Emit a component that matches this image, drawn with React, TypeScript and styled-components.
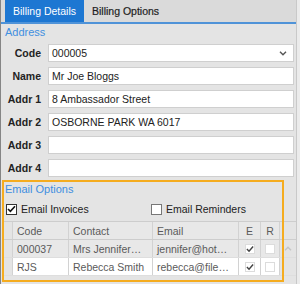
import React from "react";
import styled, { createGlobalStyle } from "styled-components";

const GlobalStyle = createGlobalStyle`
	html, body {
		margin: 0;
		padding: 0;
		background: #ebebeb;
		overflow: hidden;
	}
	body {
		font-family: "Liberation Sans", Arial, sans-serif;
	}
`;

const addressRows = [
	{ label: "Code", value: "000005", select: true },
	{ label: "Name", value: "Mr Joe Bloggs" },
	{ label: "Addr 1", value: "8 Ambassador Street" },
	{ label: "Addr 2", value: "OSBORNE PARK WA 6017" },
	{ label: "Addr 3", value: "" },
	{ label: "Addr 4", value: "" },
];

const contacts = [
	{ code: "000037", contact: "Mrs Jennifer…", email: "jennifer@hot…", e: true, r: false },
	{ code: "RJS", contact: "Rebecca Smith", email: "rebecca@file…", e: true, r: false },
];

const Chevron = ({ up }: { up?: boolean }) => (
	<svg width="8" height="5" viewBox="0 0 8 5">
		<path
			d={up ? "M1 4.2 L4 1.2 L7 4.2" : "M1 0.8 L4 3.8 L7 0.8"}
			fill="none"
			stroke={up ? "#c4c4c4" : "#555"}
			strokeWidth="1.4"
		/>
	</svg>
);

const Tick = ({ color }: { color: string }) => (
	<svg width="9" height="8" viewBox="0 0 9 8">
		<path d="M1 4 L3.4 6.4 L8 1.2" fill="none" stroke={color} strokeWidth="1.6" />
	</svg>
);

const App = () => {
	return (
		<>
			<GlobalStyle />
			<Panel>
				<TabBar>
					<Tab active>Billing Details</Tab>
					<Tab>Billing Options</Tab>
				</TabBar>
				<Body>
					<SectionTitle>Address</SectionTitle>
					<Form>
						{addressRows.map((row) => (
							<React.Fragment key={row.label}>
								<Label>{row.label}</Label>
								<Field>
									<span>{row.value}</span>
									{row.select && <Chevron />}
								</Field>
							</React.Fragment>
						))}
					</Form>
					<EmailSection>
						<SectionTitle>Email Options</SectionTitle>
						<CheckRow>
							<CheckItem>
								<CheckBox checked>{<Tick color="#111" />}</CheckBox>
								Email Invoices
							</CheckItem>
							<CheckItem>
								<CheckBox />
								Email Reminders
							</CheckItem>
						</CheckRow>
						<Grid>
							<GridRow header>
								<Cell indicator />
								<Cell>Code</Cell>
								<Cell>Contact</Cell>
								<Cell>Email</Cell>
								<Cell center>E</Cell>
								<Cell center>R</Cell>
								<Cell last />
							</GridRow>
							{contacts.map((c, i) => (
								<GridRow key={c.code} white={i === 1}>
									<Cell indicator />
									<Cell>{c.code}</Cell>
									<Cell>{c.contact}</Cell>
									<Cell>{c.email}</Cell>
									<Cell center>
										<MiniBox>{c.e && <Tick color="#444" />}</MiniBox>
									</Cell>
									<Cell center>
										<MiniBox>{c.r && <Tick color="#444" />}</MiniBox>
									</Cell>
									<Cell last>{i === 0 && <Chevron up />}</Cell>
								</GridRow>
							))}
						</Grid>
						<Highlight />
					</EmailSection>
				</Body>
			</Panel>
		</>
	);
};

const Panel = styled.div`
	width: 295px;
	height: 284px;
	background: #e4e4e4;
	border-left: 1px solid #858585;
	border-right: 1px solid #c9c9c9;
	display: flex;
	flex-direction: column;
`;

const TabBar = styled.div`
	height: 22px;
	display: flex;
	align-items: stretch;
	padding-left: 4px;
	background: #dadada;
	border-bottom: 2px solid #4f93d8;
`;

const Tab = styled.div<{ active?: boolean }>`
	display: flex;
	align-items: center;
	padding: 0 ${(p) => (p.active ? "0" : "8px")};
	width: ${(p) => (p.active ? "79px" : "auto")};
	box-sizing: border-box;
	justify-content: center;
	white-space: nowrap;
	font-size: 10.5px;
	background: ${(p) => (p.active ? "#1d77d2" : "transparent")};
	color: ${(p) => (p.active ? "#ffffff" : "#1e1e1e")};
	-webkit-text-stroke: ${(p) => (p.active ? "0" : "0.2px #1e1e1e")};
`;

const Body = styled.div`
	display: flex;
	flex-direction: column;
`;

const SectionTitle = styled.div`
	font-size: 11px;
	color: #3f8fe0;
	padding-left: 4px;
	height: 17px;
	line-height: 16px;
`;

const Form = styled.div`
	display: grid;
	grid-template-columns: 40px 246px;
	column-gap: 7px;
	row-gap: 5px;
	margin-top: 3px;
	align-items: center;
`;

const Label = styled.div`
	text-align: right;
	font-size: 10.5px;
	font-weight: bold;
	color: #222;
`;

const Field = styled.div`
	height: 18px;
	box-sizing: border-box;
	background: #fff;
	border: 1px solid #cfcfcf;
	display: flex;
	align-items: center;
	justify-content: space-between;
	padding: 0 6px 0 3px;
	font-size: 10.5px;
	color: #222;
`;

const EmailSection = styled.div`
	position: relative;
	margin-top: 3px;
	padding-top: 1px;
`;

const CheckRow = styled.div`
	display: flex;
	height: 20px;
	align-items: center;
	padding-left: 5px;
	margin-top: 1px;
`;

const CheckItem = styled.label`
	display: flex;
	align-items: center;
	gap: 4px;
	font-size: 10.5px;
	color: #222;
	width: 149px;
`;

const CheckBox = styled.span<{ checked?: boolean }>`
	width: 11px;
	height: 11px;
	box-sizing: border-box;
	border: 1px solid ${(p) => (p.checked ? "#333" : "#777")};
	background: #fff;
	display: flex;
	align-items: center;
	justify-content: center;
`;

const Grid = styled.div`
	margin-top: 2px;
	border-top: 1px solid #cdcdcd;
	margin-left: 1px;
`;

const GridRow = styled.div<{ header?: boolean; white?: boolean }>`
	display: grid;
	grid-template-columns: 11px 56px 84px 86px 22px 19px 1fr;
	height: 18px;
	border-bottom: 1px solid ${(p) => (p.header ? "#cdcdcd" : "#dedede")};
	background: ${(p) => (p.white ? "#ffffff" : "#e8e8e8")};
	box-sizing: border-box;
	& > div:first-child,
	& > div:last-child {
		background: #e4e4e4;
	}
`;

const Cell = styled.div<{ indicator?: boolean; center?: boolean; last?: boolean }>`
	display: flex;
	align-items: center;
	justify-content: ${(p) => (p.center || p.last ? "center" : "flex-start")};
	padding-left: ${(p) => (p.center || p.indicator || p.last ? "0" : "4px")};
	border-right: ${(p) => (p.last ? "none" : "1px solid #d2d2d2")};
	font-size: 10.5px;
	color: #5a5a5a;
	white-space: nowrap;
	overflow: hidden;
`;

const MiniBox = styled.span`
	width: 10px;
	height: 10px;
	box-sizing: border-box;
	border: 1px solid #dcdcdc;
	background: #fff;
	display: flex;
	align-items: center;
	justify-content: center;
`;

const Highlight = styled.div`
	position: absolute;
	left: 1px;
	top: 0;
	width: 282px;
	height: 102px;
	box-sizing: border-box;
	border: 2px solid #f5ac1f;
	pointer-events: none;
`;

export default App;
